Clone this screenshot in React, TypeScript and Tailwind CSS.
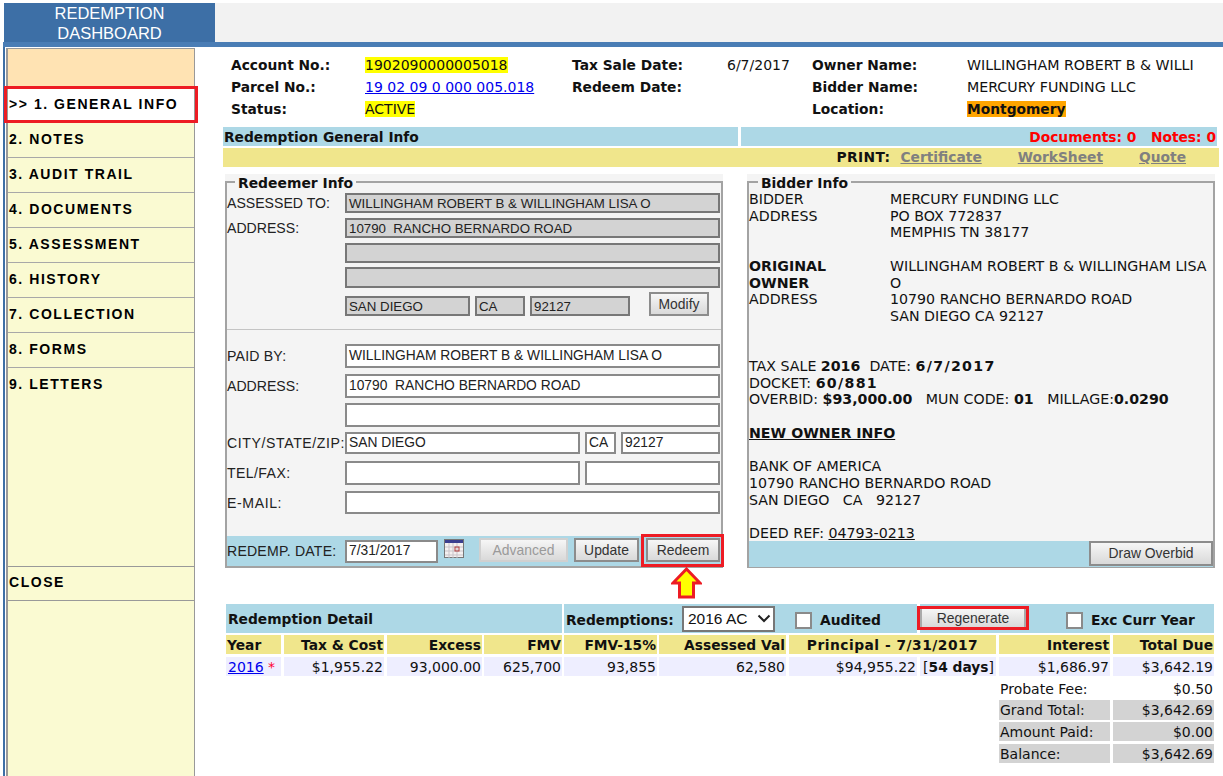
const verdana = "font-['DejaVu_Sans',sans-serif]";

function Box({ w, h, gray, children }: { w: string; h: string; gray?: boolean; children?: React.ReactNode }) {
  return (
    <div
      className={`${w} ${h} shrink-0 flex items-center border-2 font-['Liberation_Sans',sans-serif] whitespace-pre ${
        gray
          ? 'bg-[#d3d3d3] border-[#777] text-[13.3px] leading-[16px] text-[#222] pl-[2px] pt-[1px]'
          : 'bg-white border-[#8a8a8a] text-[13.8px] leading-[16px] text-[#222] pl-[2px]'
      }`}
    >
      {children}
    </div>
  );
}

function Btn({ w, h, children, disabled }: { w: string; h: string; children: React.ReactNode; disabled?: boolean }) {
  return (
    <div
      className={`${w} ${h} shrink-0 flex items-center justify-center border-2 bg-gradient-to-b from-[#f6f6f6] to-[#d9d9d9] font-['Liberation_Sans',sans-serif] text-[13.9px] leading-[16px] pb-[1px] ${
        disabled ? 'border-[#d0d0d0] text-[#9a9a9a]' : 'border-[#8c8c8c] text-[#333]'
      }`}
    >
      {children}
    </div>
  );
}

function Label({ children, track }: { children: React.ReactNode; track?: string }) {
  return (
    <div className={`w-[118px] shrink-0 font-['Liberation_Sans',sans-serif] text-[14.1px] leading-[16px] text-[#222] whitespace-nowrap ${track ?? ''}`}>
      {children}
    </div>
  );
}

const navItems = ['2. NOTES', '3. AUDIT TRAIL', '4. DOCUMENTS', '5. ASSESSMENT', '6. HISTORY', '7. COLLECTION', '8. FORMS', '9. LETTERS'];

const cols = [
  'w-[55px]',
  'ml-[3px] w-[100px]',
  'ml-[3px] w-[95px]',
  'ml-[2px] w-[78px]',
  'ml-[2px] w-[93px]',
  'ml-[2px] w-[127px]',
  'ml-[3px] w-[207px]',
  'ml-[3px] w-[111px]',
  'ml-[3px] w-[101px]',
];
const heads = ['Year', 'Tax & Cost', 'Excess', 'FMV', 'FMV-15%', 'Assessed Val', 'Principal - 7/31/2017', 'Interest', 'Total Due'];
const vals = ['$1,955.22', '93,000.00', '625,700', '93,855', '62,580'];
const summary: [string, string, string][] = [
  ['Grand Total:', '$3,642.69', 'mt-0 h-[20px] leading-[20px]'],
  ['Amount Paid:', '$0.00', 'mt-[2px] h-[19px] leading-[21px]'],
  ['Balance:', '$3,642.69', 'mt-[3px] h-[19px] leading-[21px]'],
];

export default function App() {
  return (
    <div className={`relative w-[1223px] h-[776px] overflow-hidden bg-white pt-[3px] ${verdana} text-[14px] text-[#111] [&_b]:text-[13.8px]`}>
      {/* top band */}
      <div className="flex h-[39px] ml-[4px]">
        <div className="w-[211px] bg-[#3d6fa6] text-white text-center font-['Liberation_Sans',sans-serif] text-[16.5px] leading-[20px]">
          REDEMPTION
          <br />
          DASHBOARD
        </div>
        <div className="flex-1 bg-[#f2f2f2]" />
      </div>
      <div className="h-[5px] ml-[3px] bg-[#4a7db5]" />

      <div className="flex h-[729px] ml-[3px] border-l-2 border-[#3d6fa6]">
        {/* sidebar */}
        <aside className="relative mt-[1px] ml-[1px] w-[189px] shrink-0 border-l-2 border-r border-t border-[#999] bg-[#fafad2] font-['Liberation_Sans',sans-serif] font-bold text-[14px] tracking-[1.55px] text-black">
          <div className="h-[39px] bg-[#ffe3b3]" />
          <div className="h-[35px] bg-white flex items-center pl-[1px] pb-[2px] whitespace-nowrap">{'>> 1. GENERAL INFO'}</div>
          {navItems.map((n, i) => (
            <div key={n} className={`h-[35px] flex items-center pl-[1px] pb-[2px] ${i < 7 ? 'border-b border-[#a8a8a8]' : ''}`}>
              {n}
            </div>
          ))}
          <div className="mt-[163px] h-[35px] flex items-center pl-[1px] pb-[2px] border-y border-[#999]">CLOSE</div>
          <div className="absolute left-[-4px] top-[37px] w-[194px] h-[37px] border-[3px] border-[#ed1c24]" />
        </aside>

        {/* main */}
        <main className="ml-[28px] w-[996px] shrink-0">
          {/* info */}
          <div className="ml-[8px] mt-[7px] grid grid-cols-[134px_207px_155px_85px_155px_1fr] auto-rows-[22px] items-center whitespace-nowrap">
            <b>Account No.:</b>
            <div><span className="bg-[#ffff00]">1902090000005018</span></div>
            <b>Tax Sale Date:</b>
            <div>6/7/2017</div>
            <b>Owner Name:</b>
            <div className="text-[14.2px] pt-[1px]">WILLINGHAM ROBERT B &amp; WILLI</div>

            <b>Parcel No.:</b>
            <div className="text-[#0000ee] underline">19 02 09 0 000 005.018</div>
            <b>Redeem Date:</b>
            <div />
            <b>Bidder Name:</b>
            <div className="text-[14.2px] pt-[1px]">MERCURY FUNDING LLC</div>

            <b>Status:</b>
            <div><span className="bg-[#ffff00]">ACTIVE</span></div>
            <div />
            <div />
            <b>Location:</b>
            <div><b className="bg-[#ffa500]">Montgomery</b></div>
          </div>

          {/* section bars */}
          <div className="mt-[7px] flex h-[19px] font-bold text-[13.8px] leading-[20px]">
            <div className="w-[515px] bg-[#add8e6] pl-[1px]">Redemption General Info</div>
            <div className="ml-[3px] w-[476px] bg-[#add8e6] text-right pr-[1px] text-[#ff0000] whitespace-pre">Documents: 0{'   '}Notes: 0</div>
          </div>
          <div className="mt-[2px] h-[19px] w-[996px] bg-[#f0e68c] flex items-center justify-end font-bold text-[13.8px] whitespace-nowrap pr-[33px]">
            <span className="tracking-[0.4px]">PRINT:</span>
            <span className="ml-[10px] text-[#808080] underline">Certificate</span>
            <span className="ml-[36px] text-[#808080] underline">WorkSheet</span>
            <span className="ml-[36px] text-[#808080] underline">Quote</span>
          </div>

          {/* panels */}
          <div className="mt-[7px] ml-[2px] flex">
            <div className="w-[498px] h-[394px] bg-[#f4f4f4]">
              <fieldset className="h-full border-2 border-[#a3a3a3]">
                <legend className="ml-[8px] px-[3px] h-[16px] leading-[18px] font-bold text-[13.9px]">Redeemer Info</legend>
                <div className="mt-[3px] flex items-center">
                  <Label>ASSESSED TO:</Label>
                  <Box w="w-[375px]" h="h-[20px]" gray>WILLINGHAM ROBERT B &amp; WILLINGHAM LISA O</Box>
                </div>
                <div className="mt-[5px] flex items-center">
                  <Label>ADDRESS:</Label>
                  <Box w="w-[375px]" h="h-[20px]" gray>10790  RANCHO BERNARDO ROAD</Box>
                </div>
                <div className="mt-[5px] flex pl-[118px]"><Box w="w-[375px]" h="h-[20px]" gray /></div>
                <div className="mt-[4px] flex pl-[118px]"><Box w="w-[375px]" h="h-[21px]" gray /></div>
                <div className="mt-[4px] flex items-end pl-[118px] h-[24px]">
                  <Box w="w-[125px]" h="h-[20px]" gray>SAN DIEGO</Box>
                  <div className="ml-[5px]"><Box w="w-[50px]" h="h-[20px]" gray>CA</Box></div>
                  <div className="ml-[5px]"><Box w="w-[100px]" h="h-[20px]" gray>92127</Box></div>
                  <div className="ml-[19px]"><Btn w="w-[60px]" h="h-[24px]">Modify</Btn></div>
                </div>
                <div className="mt-[13px] h-[1px] bg-[#c4c4c4]" />
                <div className="mt-[14px] flex items-center">
                  <Label track="tracking-[0.2px]">PAID BY:</Label>
                  <Box w="w-[375px]" h="h-[24px]">WILLINGHAM ROBERT B &amp; WILLINGHAM LISA O</Box>
                </div>
                <div className="mt-[6px] flex items-center">
                  <Label>ADDRESS:</Label>
                  <Box w="w-[375px]" h="h-[24px]">10790  RANCHO BERNARDO ROAD</Box>
                </div>
                <div className="mt-[5px] flex pl-[118px]"><Box w="w-[375px]" h="h-[24px]" /></div>
                <div className="mt-[5px] flex items-center">
                  <Label track="tracking-[0.6px]">CITY/STATE/ZIP:</Label>
                  <Box w="w-[235px]" h="h-[22px]">SAN DIEGO</Box>
                  <div className="ml-[5px]"><Box w="w-[31px]" h="h-[22px]">CA</Box></div>
                  <div className="ml-[5px]"><Box w="w-[99px]" h="h-[22px]">92127</Box></div>
                </div>
                <div className="mt-[7px] flex items-center">
                  <Label track="tracking-[0.4px]">TEL/FAX:</Label>
                  <Box w="w-[235px]" h="h-[24px]" />
                  <div className="ml-[5px]"><Box w="w-[135px]" h="h-[24px]" /></div>
                </div>
                <div className="mt-[6px] flex items-center">
                  <Label track="tracking-[0.6px]">E-MAIL:</Label>
                  <Box w="w-[375px]" h="h-[23px]" />
                </div>
                <div className="mt-[22px] h-[30px] bg-[#add8e6] flex items-center">
                  <Label track="tracking-[0.2px]">REDEMP. DATE:</Label>
                  <Box w="w-[93px]" h="h-[23px]">7/31/2017</Box>
                  <svg className="ml-[6px] mb-[6px] shrink-0" width="20" height="19" viewBox="0 0 20 19">
                    <rect x="0.5" y="0.5" width="19" height="18" fill="#f4f0f0" stroke="#777" />
                    <rect x="1" y="1" width="18" height="3" fill="#3b3f8f" />
                    <path d="M1 8h18M1 12h18M1 16h18M5 4v15M9 4v15M13 4v15" stroke="#c9c4c9" />
                    <rect x="11" y="8" width="4" height="4" fill="none" stroke="#b03a3a" />
                  </svg>
                  <div className="ml-[15px] mb-[2px]"><Btn w="w-[89px]" h="h-[24px]" disabled>Advanced</Btn></div>
                  <div className="ml-[6px] mb-[2px]"><Btn w="w-[65px]" h="h-[24px]">Update</Btn></div>
                  <div className="ml-[7px] mb-[2px]"><Btn w="w-[74px]" h="h-[24px]">Redeem</Btn></div>
                </div>
              </fieldset>
            </div>

            <div className="ml-[24px] w-[468px] h-[394px] bg-[#f4f4f4]">
              <fieldset className="h-full border-2 border-[#a3a3a3]">
                <legend className="ml-[9px] px-[3px] h-[16px] leading-[18px] font-bold text-[13.9px]">Bidder Info</legend>
                <div className="pt-[1px] leading-[16.7px] h-[351px] text-[14.2px] [&_b]:text-[14.2px]">
                  <div className="grid grid-cols-[141px_1fr]">
                    <div>BIDDER<br />ADDRESS</div>
                    <div>MERCURY FUNDING LLC<br />PO BOX 772837<br />MEMPHIS TN 38177</div>
                    <div className="col-span-2 h-[16.7px]" />
                    <div><b>ORIGINAL<br />OWNER</b><br />ADDRESS</div>
                    <div>WILLINGHAM ROBERT B &amp; WILLINGHAM LISA<br />O<br />10790 RANCHO BERNARDO ROAD<br />SAN DIEGO CA 92127</div>
                  </div>
                  <div className="mt-[33.4px] whitespace-pre">TAX SALE <b>2016</b>  DATE: <b className="tracking-[1.3px]">6/7/2017</b></div>
                  <div>DOCKET: <b className="tracking-[1.3px]">60/881</b></div>
                  <div className="whitespace-pre">OVERBID: <b>$93,000.00</b>   MUN CODE: <b>01</b>   MILLAGE:<b>0.0290</b></div>
                  <div className="mt-[16.7px] font-bold underline">NEW OWNER INFO</div>
                  <div className="mt-[16.7px]">BANK OF AMERICA<br />10790 RANCHO BERNARDO ROAD</div>
                  <div className="whitespace-pre">SAN DIEGO   CA   92127</div>
                  <div className="mt-[16.7px]">DEED REF: <span className="underline">04793-0213</span></div>
                </div>
                <div className="h-[26px] bg-[#add8e6] flex justify-end">
                  <Btn w="w-[124px]" h="h-[25px]">Draw Overbid</Btn>
                </div>
              </fieldset>
            </div>
          </div>

          {/* detail */}
          <div className="relative mt-[36px] ml-[3px] flex h-[29px] font-bold text-[13.8px] whitespace-nowrap">
            <div className="w-[336px] bg-[#add8e6] pl-[2px] pt-[7px] leading-[17px]">Redemption Detail</div>
            <div className="ml-[2px] w-[353px] bg-[#add8e6] flex items-center pl-[2px]">
              <span className="mt-[3px] w-[107px]">Redemptions:</span>
              <div className="ml-[9px] w-[93px] h-[26px] bg-white border-2 border-[#777] flex items-center justify-between pl-[4px] pr-[2px] font-normal font-['Liberation_Sans',sans-serif] text-[15.5px]">
                <span>2016 AC</span>
                <svg width="14" height="9" viewBox="0 0 14 9"><path d="M1.5 1.5 7 7l5.5-5.5" fill="none" stroke="#222" strokeWidth="2" /></svg>
              </div>
              <div className="ml-[20px] mt-[3px] w-[17px] h-[17px] bg-white border-2 border-[#8a8a8a]" />
              <span className="ml-[8px] mt-[3px]">Audited</span>
            </div>
            <div className="ml-[3px] w-[294px] bg-[#add8e6] flex items-center">
              <div className="w-[107px] h-[20px]" />
              <div className="ml-[39px] mt-[3px] w-[17px] h-[17px] bg-white border-2 border-[#8a8a8a]" />
              <span className="ml-[8px] mt-[3px]">Exc Curr Year</span>
            </div>
            <div className="absolute left-[691px] top-[2px] w-[112px] h-[24px] border-[3px] border-[#ed1c24]">
              <div className="h-full bg-gradient-to-b from-[#f6f6f6] to-[#d9d9d9] border-x-2 border-[#aaa] flex items-center justify-center font-normal font-['Liberation_Sans',sans-serif] text-[13.9px] text-[#333]">Regenerate</div>
            </div>
          </div>

          <div className="ml-[3px] mt-[2px] flex h-[19px] font-bold text-[13.8px] leading-[21px] whitespace-nowrap">
            {heads.map((h, i) => (
              <div key={h} className={`${cols[i]} bg-[#f0e68c] ${i === 0 ? 'pl-[1px]' : i === 6 ? 'text-center tracking-[0.5px]' : 'text-right pr-[1px]'}`}>{h}</div>
            ))}
          </div>
          <div className="ml-[3px] mt-[3px] flex h-[19px] leading-[21px] whitespace-nowrap">
            <div className={`${cols[0]} bg-[#eeeeff] pl-[2px]`}>
              <span className="text-[#0000ee] underline">2016</span> <span className="text-[#ff0033]">*</span>
            </div>
            {vals.map((v, i) => (
              <div key={v} className={`${cols[i + 1]} bg-[#eeeeff] text-right pr-[1px]`}>{v}</div>
            ))}
            <div className="ml-[3px] w-[128px] bg-[#eeeeff] text-right pr-[1px]">$94,955.22</div>
            <div className="ml-[3px] w-[76px] bg-[#eeeeff] text-right pr-[2px]">[<b>54 days</b>]</div>
            <div className={`${cols[7]} bg-[#eeeeff] text-right pr-[1px]`}>$1,686.97</div>
            <div className={`${cols[8]} bg-[#eeeeff] text-right pr-[1px]`}>$3,642.19</div>
          </div>

          <div className="ml-[776px] mt-[4px] flex h-[20px] leading-[18px]">
            <div className="w-[111px] pl-[1px]">Probate Fee:</div>
            <div className="ml-[3px] w-[101px] text-right pr-[1px]">$0.50</div>
          </div>
          {summary.map(([a, b, c]) => (
            <div key={a} className={`ml-[776px] flex ${c}`}>
              <div className="w-[111px] pl-[1px] bg-[#d3d3d3]">{a}</div>
              <div className="ml-[3px] w-[101px] text-right pr-[1px] bg-[#d3d3d3]">{b}</div>
            </div>
          ))}
        </main>
      </div>

      {/* arrow pointing at the Redeem button */}
      <svg className="absolute left-[671px] top-[567px]" width="31" height="32" viewBox="0 0 31 32">
        <path d="M15.5 2 29 16h-6.5v14h-14V16H2Z" fill="#ffff00" stroke="#ed1c24" strokeWidth="3" />
      </svg>
      <div className="absolute left-[641px] top-[534px] w-[83px] h-[33px] border-[3px] border-[#ed1c24]" />
    </div>
  );
}
